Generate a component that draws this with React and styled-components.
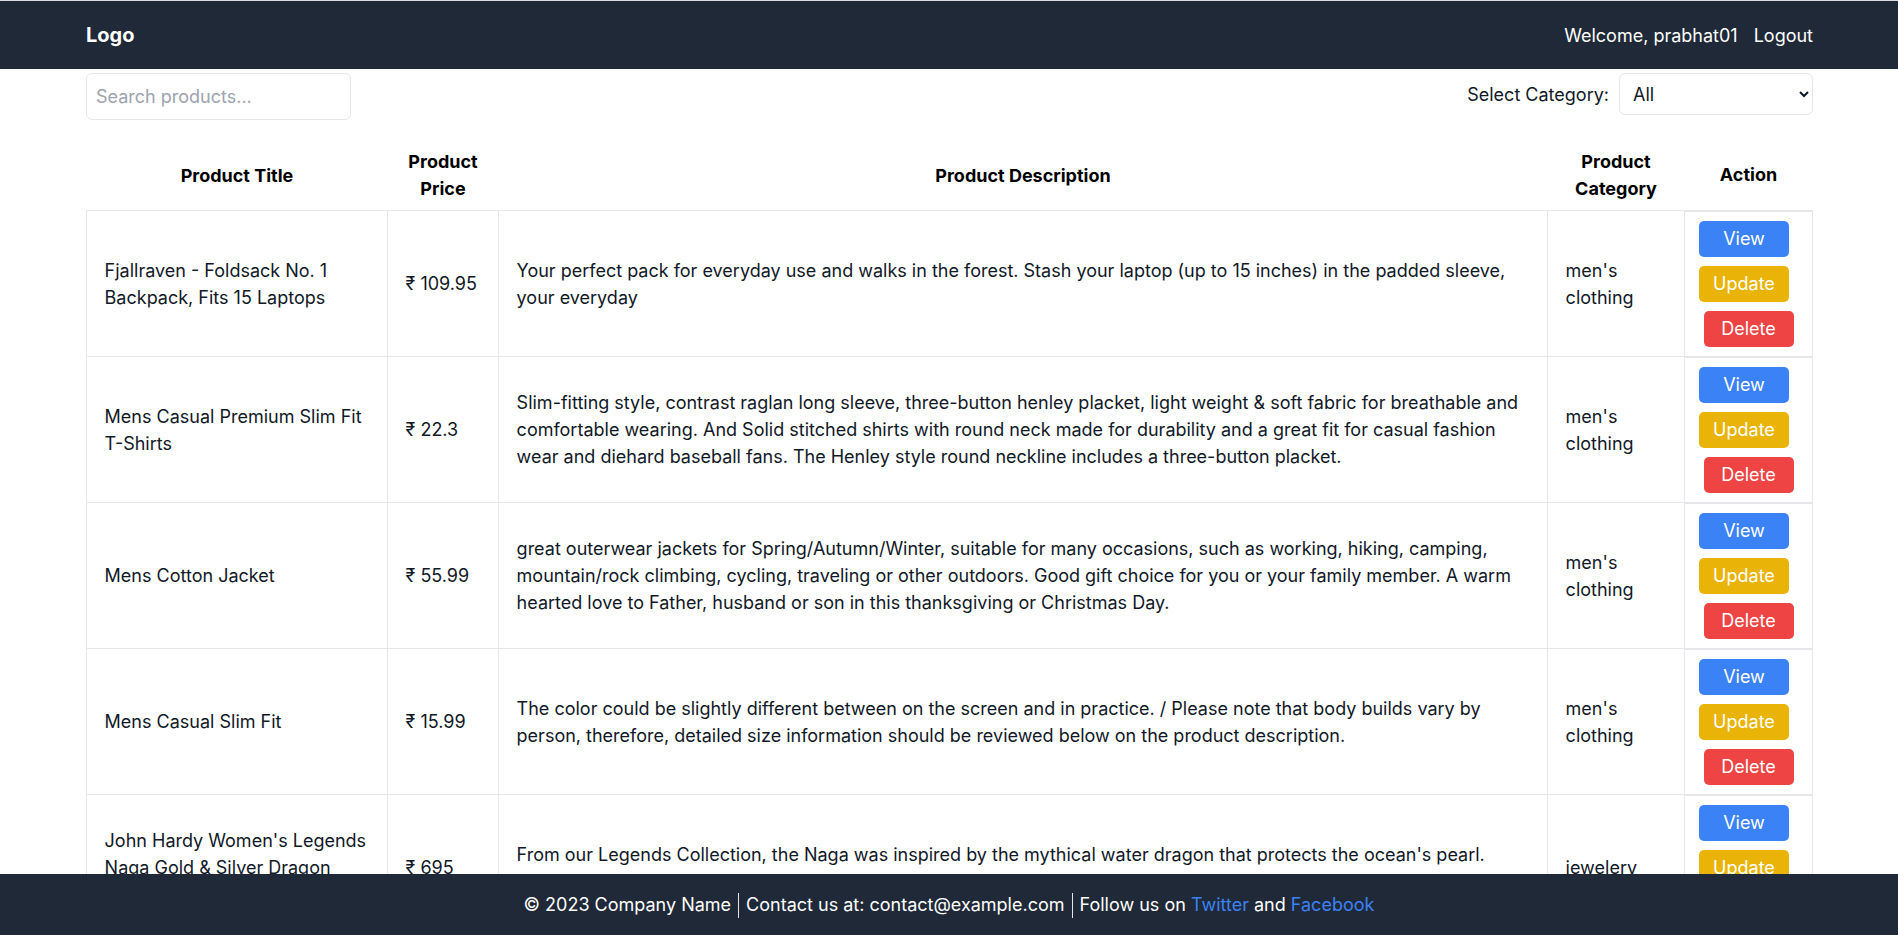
// App.jsx
import React, { useState } from "react";
import styled, { createGlobalStyle } from "styled-components";

const GlobalStyle = createGlobalStyle`
    * { box-sizing: border-box; }
    body {
        margin: 0;
        font-family: Inter, "Noto Sans", "Liberation Sans", sans-serif;
        font-size: 18px;
        line-height: 27px;
        color: #111827;
        background: #ffffff;
    }
`;

const NavBar = styled.nav`
    height: 69px;
    border-top: 1px solid #d9dbde;
    background: #1f2937;
    color: #ffffff;
    display: flex;
    align-items: center;
    justify-content: space-between;
    padding: 0 85px 0 86px;
`;

const Logo = styled.div`
    font-size: 20px;
    font-weight: 700;
`;

const NavRight = styled.div`
    display: flex;
    align-items: center;
    gap: 16px;
`;

const NavLink = styled.a`
    color: #ffffff;
    text-decoration: none;
    cursor: pointer;
`;

const Main = styled.main`
    padding: 4px 85px 80px 86px;
`;

const FilterRow = styled.div`
    display: flex;
    align-items: flex-start;
    justify-content: space-between;
`;

const SearchInput = styled.input`
    width: 265px;
    height: 47px;
    padding: 10px 9px;
    border: 1px solid #e5e7eb;
    border-radius: 6px;
    font: inherit;
    color: #111827;
    outline: none;
    &::placeholder {
        color: #9ca3af;
    }
`;

const CategoryBox = styled.div`
    display: flex;
    align-items: center;
    gap: 10px;
    height: 42px;
`;

const Label = styled.label`
    color: #111827;
`;

const Select = styled.select`
    width: 194px;
    height: 42px;
    padding: 0 9px;
    border: 1px solid #e5e7eb;
    border-radius: 6px;
    background: #ffffff;
    font: inherit;
    color: #111827;
    outline: none;
`;

const Table = styled.table`
    width: 100%;
    margin-top: 20px;
    border-collapse: collapse;
    table-layout: fixed;
`;

const Th = styled.th`
    padding: 8px 17.6px;
    font-weight: 700;
    text-align: center;
    vertical-align: middle;
    color: #000000;
`;

const Td = styled.td`
    padding: 8px 17.6px;
    border: 1px solid #e5e7eb;
    vertical-align: middle;
    text-align: left;
`;

const ActionTd = styled.td`
    padding: 9px 8px;
    border: 1px solid #e5e7eb;
    border-top-width: 2px;
    vertical-align: middle;
`;

const ActionStack = styled.div`
    display: flex;
    flex-direction: column;
    align-items: center;
    gap: 9px;
`;

const colors = {
    view: "#3b82f6",
    update: "#eab308",
    delete: "#ef4444",
};

const ActionButton = styled.button`
    width: 90px;
    height: 36px;
    padding: 0;
    border: none;
    border-radius: 5px;
    background: ${(p) => colors[p.$kind]};
    color: #ffffff;
    font: inherit;
    cursor: pointer;
    margin-right: ${(p) => (p.$kind === "delete" ? "0" : "9px")};
`;

const Footer = styled.footer`
    position: fixed;
    left: 0;
    right: 0;
    bottom: 0;
    height: 61px;
    background: #1f2937;
    color: #ffffff;
    display: flex;
    align-items: center;
    justify-content: center;
`;

const Sep = styled.span`
    display: inline-block;
    width: 1px;
    height: 25px;
    margin: 0 7px;
    background: #e5e7eb;
    vertical-align: middle;
`;

const FooterLink = styled.a`
    color: #3b82f6;
    text-decoration: none;
`;

const products = [
    {
        id: 1,
        title: "Fjallraven - Foldsack No. 1 Backpack, Fits 15 Laptops",
        price: 109.95,
        description:
            "Your perfect pack for everyday use and walks in the forest. Stash your laptop (up to 15 inches) in the padded sleeve, your everyday",
        category: "men's clothing",
    },
    {
        id: 2,
        title: "Mens Casual Premium Slim Fit T-Shirts",
        price: 22.3,
        description:
            "Slim-fitting style, contrast raglan long sleeve, three-button henley placket, light weight & soft fabric for breathable and comfortable wearing. And Solid stitched shirts with round neck made for durability and a great fit for casual fashion wear and diehard baseball fans. The Henley style round neckline includes a three-button placket.",
        category: "men's clothing",
    },
    {
        id: 3,
        title: "Mens Cotton Jacket",
        price: 55.99,
        description:
            "great outerwear jackets for Spring/Autumn/Winter, suitable for many occasions, such as working, hiking, camping, mountain/rock climbing, cycling, traveling or other outdoors. Good gift choice for you or your family member. A warm hearted love to Father, husband or son in this thanksgiving or Christmas Day.",
        category: "men's clothing",
    },
    {
        id: 4,
        title: "Mens Casual Slim Fit",
        price: 15.99,
        description:
            "The color could be slightly different between on the screen and in practice. / Please note that body builds vary by person, therefore, detailed size information should be reviewed below on the product description.",
        category: "men's clothing",
    },
    {
        id: 5,
        title: "John Hardy Women's Legends Naga Gold & Silver Dragon Station Chain Bracelet",
        price: 695,
        description:
            "From our Legends Collection, the Naga was inspired by the mythical water dragon that protects the ocean's pearl. Wear facing inward to be bestowed with love and abundance, or outward for protection.",
        category: "jewelery",
    },
    {
        id: 6,
        title: "Solid Gold Petite Micropave",
        price: 168,
        description:
            "Satisfaction Guaranteed. Return or exchange any order within 30 days.Designed and sold by Hafeez Center in the United States. Satisfaction Guaranteed. Return or exchange any order within 30 days.",
        category: "jewelery",
    },
];

const App = () => {
    const [search, setSearch] = useState("");
    const [category, setCategory] = useState("all");

    const shown = products.filter(
        (p) =>
            p.title.toLowerCase().includes(search.toLowerCase()) &&
            (category === "all" || p.category === category)
    );

    return (
        <>
            <GlobalStyle />
            <NavBar>
                <Logo>Logo</Logo>
                <NavRight>
                    <span>Welcome, prabhat01</span>
                    <NavLink>Logout</NavLink>
                </NavRight>
            </NavBar>
            <Main>
                <FilterRow>
                    <SearchInput
                        placeholder="Search products..."
                        value={search}
                        onChange={(e) => setSearch(e.target.value)}
                    />
                    <CategoryBox>
                        <Label htmlFor="cat">Select Category:</Label>
                        <Select id="cat" value={category} onChange={(e) => setCategory(e.target.value)}>
                            <option value="all">All</option>
                            <option value="men's clothing">men's clothing</option>
                            <option value="jewelery">jewelery</option>
                        </Select>
                    </CategoryBox>
                </FilterRow>
                <Table>
                    <colgroup>
                        <col style={{ width: 301 }} />
                        <col style={{ width: 111 }} />
                        <col />
                        <col style={{ width: 137 }} />
                        <col style={{ width: 128 }} />
                    </colgroup>
                    <thead>
                        <tr>
                            <Th>Product Title</Th>
                            <Th>Product Price</Th>
                            <Th>Product Description</Th>
                            <Th>Product Category</Th>
                            <Th>Action</Th>
                        </tr>
                    </thead>
                    <tbody>
                        {shown.map((p) => (
                            <tr key={p.id}>
                                <Td>{p.title}</Td>
                                <Td>₹ {p.price}</Td>
                                <Td>{p.description}</Td>
                                <Td>{p.category}</Td>
                                <ActionTd>
                                    <ActionStack>
                                        <ActionButton $kind="view">View</ActionButton>
                                        <ActionButton $kind="update">Update</ActionButton>
                                        <ActionButton $kind="delete">Delete</ActionButton>
                                    </ActionStack>
                                </ActionTd>
                            </tr>
                        ))}
                    </tbody>
                </Table>
            </Main>
            <Footer>
                <span>
                    © 2023 Company Name<Sep />Contact us at: contact@example.com<Sep />Follow us on{" "}
                    <FooterLink>Twitter</FooterLink> and <FooterLink>Facebook</FooterLink>
                </span>
            </Footer>
        </>
    );
};

export default App;
